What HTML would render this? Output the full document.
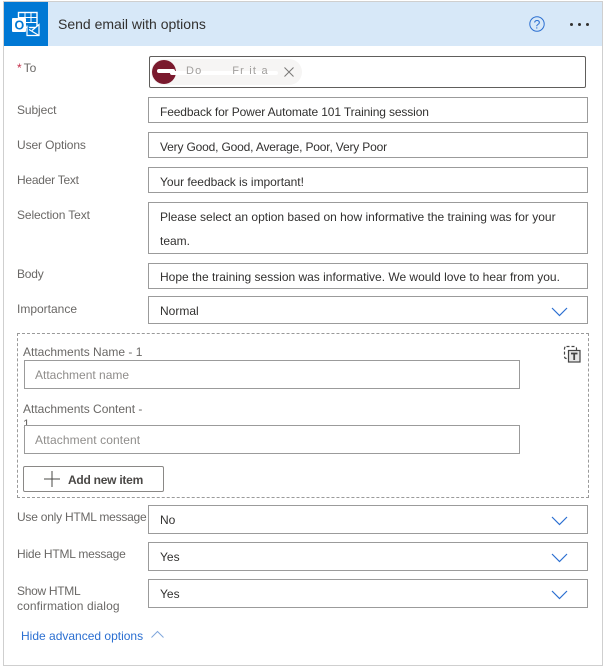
<!DOCTYPE html>
<html>
<head>
<meta charset="utf-8">
<style>
html,body{margin:0;padding:0;background:#fff}
body{width:606px;height:668px;position:relative;overflow:hidden;font-family:"Liberation Sans",sans-serif;font-size:12px;color:#323130}
.a{position:absolute;box-sizing:border-box}
.lbl{position:absolute;color:#6a6866;font-size:12px;line-height:15px;white-space:nowrap}
.inp{position:absolute;box-sizing:border-box;left:148px;width:440px;border:1px solid #9b9b9b;background:#fff;padding-left:11px;line-height:26px;color:#323130;white-space:nowrap}
.chev{position:absolute;right:19px;top:10px}
</style>
</head>
<body>
<div class="a" style="left:3px;top:1px;width:600px;height:665px;border:1px solid #cfcfcf"></div>
<div class="a" style="left:4px;top:2px;width:598px;height:44px;background:#d7e8f8"></div>
<div class="a" style="left:4px;top:2px;width:44px;height:44px;background:#0078d4"></div>
<svg class="a" style="left:11px;top:10px" width="30" height="28" viewBox="0 0 30 28">
<rect x="7.500" y="2.500" width="18.500" height="15" fill="none" stroke="#fff" stroke-width="1.400"/>
<path d="M14 2.500V13M20 2.500V13M7.500 7.500H26M7.500 12.500H26" stroke="#fff" stroke-width="1"/>
<rect x="1" y="8" width="14" height="14" rx="1" fill="#fff"/>
<text x="3.500" y="19.500" font-family="Liberation Sans" font-size="12.500" font-weight="bold" fill="#0078d4">O</text>
<path d="M16 15.500V25.500H28V14.500L21 20.500" fill="#0078d4" stroke="#fff" stroke-width="1.200"/>
<path d="M18 19.500L28 25.500" stroke="#fff" stroke-width="1.200"/>
</svg>
<div class="a" style="left:58px;top:15px;font-size:14px;line-height:18px;color:#323130;white-space:nowrap">Send email with options</div>
<svg class="a" style="left:529px;top:16px" width="17" height="17" viewBox="0 0 17 17">
<circle cx="8" cy="8" r="7.200" fill="none" stroke="#2b6fd1" stroke-width="1"/>
<text x="8" y="12.500" text-anchor="middle" font-family="Liberation Sans" font-size="12" fill="#2b6fd1">?</text>
</svg>
<div class="a" style="left:570px;top:23px;width:3px;height:3px;border-radius:50%;background:#323130"></div>
<div class="a" style="left:578px;top:23px;width:3px;height:3px;border-radius:50%;background:#323130"></div>
<div class="a" style="left:586px;top:23px;width:3px;height:3px;border-radius:50%;background:#323130"></div>

<div class="lbl" style="left:17px;top:61px"><span style="color:#c4314b;margin-right:2px">*</span>To</div>
<div class="a" style="left:149px;top:56px;width:437px;height:32px;border:1px solid #605e5c;border-radius:2px;background:#fff"></div>
<div class="a" style="left:151px;top:59px;width:151px;height:26px;border-radius:13px;background:#f6f5f4"></div>
<div class="a" style="left:152px;top:60px;width:24px;height:24px;border-radius:50%;background:#7a1a2e"></div>
<div class="a" style="left:157px;top:69px;width:18px;height:4px;background:#fff;border-radius:2px"></div>
<div class="a" style="left:170px;top:71px;width:108px;height:4px;background:#fff;border-radius:2px"></div>
<div class="a" style="left:186px;top:64px;font-size:11px;line-height:14px;color:#a19f9d;letter-spacing:1.200px;white-space:nowrap">Do&nbsp;&nbsp;&nbsp;&nbsp;&nbsp;&nbsp;&nbsp;Fr&nbsp;it&nbsp;a</div>
<svg class="a" style="left:283px;top:66px" width="12" height="12" viewBox="0 0 12 12"><path d="M1.500 1.500L10.500 10.500M10.500 1.500L1.500 10.500" stroke="#7a7876" stroke-width="1"/></svg>

<div class="lbl" style="left:17px;top:103px;letter-spacing:-.1px">Subject</div>
<div class="inp" style="top:97px;height:26px;line-height:28px;letter-spacing:-.125px">Feedback for Power Automate 101 Training session</div>
<div class="lbl" style="left:17px;top:138px;letter-spacing:-.1px">User Options</div>
<div class="inp" style="top:132px;height:26px;line-height:28px;letter-spacing:-.17px">Very Good, Good, Average, Poor, Very Poor</div>
<div class="lbl" style="left:17px;top:173px;letter-spacing:-.25px">Header Text</div>
<div class="inp" style="top:167px;height:26px;line-height:28px;letter-spacing:-.04px">Your feedback is important!</div>
<div class="lbl" style="left:17px;top:208px;letter-spacing:-.12px">Selection Text</div>
<div class="inp" style="top:202px;height:52px;white-space:normal;line-height:24px;padding-top:2px">Please select an option based on how informative the training was for your team.</div>
<div class="lbl" style="left:17px;top:267px;letter-spacing:-.2px">Body</div>
<div class="inp" style="top:263px;height:26px;letter-spacing:-.01px">Hope the training session was informative. We would love to hear from you.</div>
<div class="lbl" style="left:17px;top:302px">Importance</div>
<div class="inp" style="top:296px;height:28px;line-height:28px">Normal<svg class="chev" width="17" height="10" viewBox="0 0 17 10"><path d="M1 1L8.500 8.500L16 1" fill="none" stroke="#2b6fd1" stroke-width="1.200"/></svg></div>

<div class="a" style="left:17px;top:333px;width:572px;height:165px;border:1px dashed #9a9a9a"></div>
<div class="lbl" style="left:23px;top:345px">Attachments Name - 1</div>
<div class="a" style="left:24px;top:360px;width:496px;height:29px;border:1px solid #9b9b9b;background:#fff;padding-left:10px;line-height:28px;color:#8f8d8b">Attachment name</div>
<div class="lbl" style="left:23px;top:402px;width:125px;white-space:normal">Attachments Content - 1</div>
<div class="a" style="left:24px;top:425px;width:496px;height:29px;border:1px solid #9b9b9b;background:#fff;padding-left:10px;line-height:28px;color:#8f8d8b;letter-spacing:.1px">Attachment content</div>
<svg class="a" style="left:563px;top:345px" width="19" height="19" viewBox="0 0 19 19">
<rect x="1.500" y="1.500" width="12" height="12" rx="2" fill="none" stroke="#444" stroke-width="1.200" stroke-dasharray="3 2"/>
<rect x="5.500" y="5.500" width="11.500" height="11.500" fill="#e6e6e6" stroke="#444" stroke-width="1.200"/>
<path d="M8 8.500H14.500M11.200 8.500V15" stroke="#444" stroke-width="1.800"/>
</svg>
<div class="a" style="left:23px;top:466px;width:141px;height:26px;border:1px solid #8a8886;border-radius:2px;background:#fff"></div>
<svg class="a" style="left:43px;top:471px" width="18" height="16" viewBox="0 0 18 16"><path d="M1 8H17M9 0V16" stroke="#4a4846" stroke-width="1"/></svg>
<div class="a" style="left:68px;top:473px;font-size:12px;line-height:15px;font-weight:bold;color:#4a4846;letter-spacing:-.25px;white-space:nowrap">Add new item</div>

<div class="lbl" style="left:17px;top:510px;letter-spacing:-.23px">Use only HTML message</div>
<div class="inp" style="top:505px;height:29px;line-height:28px">No<svg class="chev" width="17" height="10" viewBox="0 0 17 10"><path d="M1 1L8.500 8.500L16 1" fill="none" stroke="#2b6fd1" stroke-width="1.200"/></svg></div>
<div class="lbl" style="left:17px;top:547px;letter-spacing:-.22px">Hide HTML message</div>
<div class="inp" style="top:542px;height:29px;line-height:28px">Yes<svg class="chev" width="17" height="10" viewBox="0 0 17 10"><path d="M1 1L8.500 8.500L16 1" fill="none" stroke="#2b6fd1" stroke-width="1.200"/></svg></div>
<div class="lbl" style="left:17px;top:584px;letter-spacing:-.3px">Show HTML</div>
<div class="lbl" style="left:17px;top:599px;letter-spacing:.1px">confirmation dialog</div>
<div class="inp" style="top:579px;height:29px;line-height:28px">Yes<svg class="chev" width="17" height="10" viewBox="0 0 17 10"><path d="M1 1L8.500 8.500L16 1" fill="none" stroke="#2b6fd1" stroke-width="1.200"/></svg></div>

<div class="a" style="left:21px;top:629px;font-size:12px;line-height:15px;color:#2b6fd1;white-space:nowrap">Hide advanced options</div>
<svg class="a" style="left:151px;top:630px" width="13" height="9" viewBox="0 0 13 9"><path d="M0.500 7.500L6.500 1.500L12.500 7.500" fill="none" stroke="#7fa6dc" stroke-width="1"/></svg>
</body>
</html>
